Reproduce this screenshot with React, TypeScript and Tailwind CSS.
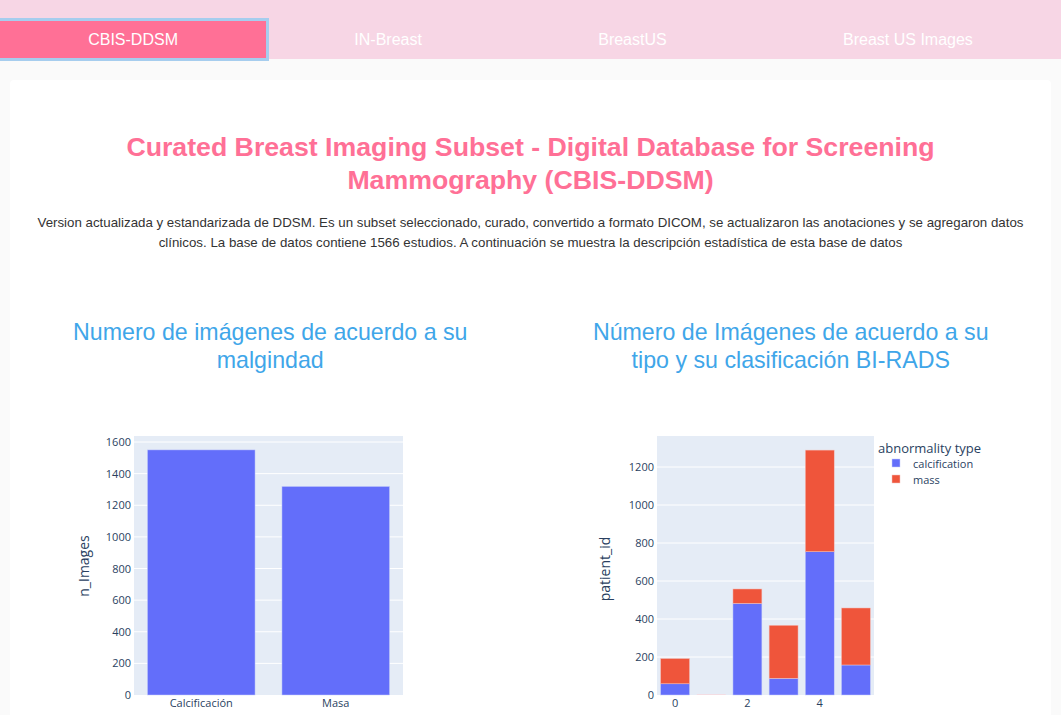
import React from 'react';

const tabs = ['CBIS-DDSM', 'IN-Breast', 'BreastUS', 'Breast US Images'];

function Grid({ ticks, x0, x1, y0, scale, top }: { ticks: number[]; x0: number; x1: number; y0: number; scale: number; top: number }) {
  return (
    <g>
      <rect x={x0} y={top} width={x1 - x0} height={y0 - top} fill="#e5ecf6" />
      {ticks.map((t) => (
        <g key={t}>
          {t > 0 && <line x1={x0} x2={x1} y1={y0 - t * scale} y2={y0 - t * scale} stroke="#ffffff" strokeWidth={1} />}
          <text x={x0 - 3} y={y0 - t * scale + 4} textAnchor="end" fontSize={11} fill="#2a3f5f">
            {t}
          </text>
        </g>
      ))}
    </g>
  );
}

function MalignancyChart() {
  const x0 = 124;
  const x1 = 393;
  const y0 = 321;
  const top = 62;
  const scale = 253 / 1600;
  const data = [
    { label: 'Calcificación', value: 1550 },
    { label: 'Masa', value: 1319 },
  ];
  const cw = (x1 - x0) / data.length;
  return (
    <svg width={520} height={345} className="block font-['Open_Sans',Arial,sans-serif]">
      <Grid ticks={[0, 200, 400, 600, 800, 1000, 1200, 1400, 1600]} x0={x0} x1={x1} y0={y0} scale={scale} top={top} />
      {data.map((d, i) => {
        const bx = x0 + i * cw + cw * 0.1;
        const h = d.value * scale;
        return (
          <g key={d.label}>
            <rect x={bx} y={y0 - h} width={cw * 0.8} height={h} fill="#636efa" stroke="#c8cffa" strokeWidth={0.5} />
            <text x={x0 + i * cw + cw / 2} y={333} textAnchor="middle" fontSize={11} fill="#2a3f5f">
              {d.label}
            </text>
          </g>
        );
      })}
      <text transform="translate(79 192) rotate(-90)" textAnchor="middle" fontSize={14} fill="#2a3f5f">
        n_Images
      </text>
    </svg>
  );
}

function BiradsChart() {
  const x0 = 126;
  const x1 = 343;
  const y0 = 321;
  const top = 62;
  const scale = 0.19;
  const data = [
    { calc: 59, mass: 133 },
    { calc: 0, mass: 4 },
    { calc: 482, mass: 76 },
    { calc: 88, mass: 279 },
    { calc: 754, mass: 535 },
    { calc: 158, mass: 300 },
  ];
  const cw = (x1 - x0) / data.length;
  return (
    <svg width={520} height={345} className="block font-['Open_Sans',Arial,sans-serif]">
      <Grid ticks={[0, 200, 400, 600, 800, 1000, 1200]} x0={x0} x1={x1} y0={y0} scale={scale} top={top} />
      {data.map((d, i) => {
        const bx = x0 + i * cw + cw * 0.1;
        const hc = d.calc * scale;
        const hm = d.mass * scale;
        if (d.calc === 0) {
          return <rect key={i} x={bx} y={y0 - 1} width={cw * 0.8} height={1} fill="#f3dde3" />;
        }
        return (
          <g key={i}>
            <rect x={bx} y={y0 - hc} width={cw * 0.8} height={hc} fill="#636efa" stroke="#c8cffa" strokeWidth={0.5} />
            <rect x={bx} y={y0 - hc - hm} width={cw * 0.8} height={hm} fill="#ef553b" stroke="#f3c4c0" strokeWidth={0.5} />
          </g>
        );
      })}
      {[0, 2, 4].map((t) => (
        <text key={t} x={x0 + t * cw + cw / 2} y={333} textAnchor="middle" fontSize={11} fill="#2a3f5f">
          {t}
        </text>
      ))}
      <text transform="translate(79 195) rotate(-90)" textAnchor="middle" fontSize={14} fill="#2a3f5f">
        patient_id
      </text>
      {/* legend */}
      <text x={347} y={79} fontSize={13} fill="#2a3f5f">
        abnormality type
      </text>
      <rect x={361} y={85} width={8} height={8} fill="#636efa" stroke="#c8cffa" strokeWidth={0.5} />
      <text x={382} y={94} fontSize={11} fill="#2a3f5f">
        calcification
      </text>
      <rect x={361} y={101} width={8} height={8} fill="#ef553b" stroke="#f3c4c0" strokeWidth={0.5} />
      <text x={382} y={110} fontSize={11} fill="#2a3f5f">
        mass
      </text>
    </svg>
  );
}

export default function App() {
  return (
    <div className="min-h-screen bg-[#fafafa] overflow-hidden font-['Liberation_Sans',Arial,sans-serif]">
      {/* Tabs */}
      <div className="flex bg-[#f7d6e5] pt-[21px] pb-px">
        {tabs.map((t, i) => (
          <div
            key={t}
            className={
              i === 0
                ? 'flex-auto h-[37px] flex items-center justify-center text-[16px] text-white bg-[#ff7096] ring-[3px] ring-[#a6cdee]'
                : 'flex-auto h-[37px] flex items-center justify-center text-[16px] text-white'
            }
          >
            {t}
          </div>
        ))}
      </div>

      {/* Card */}
      <div className="mx-[10px] mt-[21px] bg-white rounded pt-[51px]">
        <h1 className="text-center text-[26.7px] leading-[33px] font-bold text-[#ff7096] px-[110px]">
          Curated Breast Imaging Subset - Digital Database for Screening Mammography (CBIS-DDSM)
        </h1>
        <p className="mt-[16px] text-center text-[13.3px] leading-[20px] text-[#333333] px-[14px]">
          Version actualizada y estandarizada de DDSM. Es un subset seleccionado, curado, convertido a formato DICOM, se
          actualizaron las anotaciones y se agregaron datos clínicos. La base de datos contiene 1566 estudios. A continuación
          se muestra la descripción estadística de esta base de datos
        </p>

        <div className="grid grid-cols-2 mt-[65px]">
          <div>
            <h2 className="text-center text-[23.2px] leading-[28px] text-[#3fa6e9] px-[50px]">
              Numero de imágenes de acuerdo a su malgindad
            </h2>
            <MalignancyChart />
          </div>
          <div>
            <h2 className="text-center text-[23.2px] leading-[28px] text-[#3fa6e9] px-[50px]">
              Número de Imágenes de acuerdo a su tipo y su clasificación BI-RADS
            </h2>
            <BiradsChart />
          </div>
        </div>
      </div>
    </div>
  );
}
